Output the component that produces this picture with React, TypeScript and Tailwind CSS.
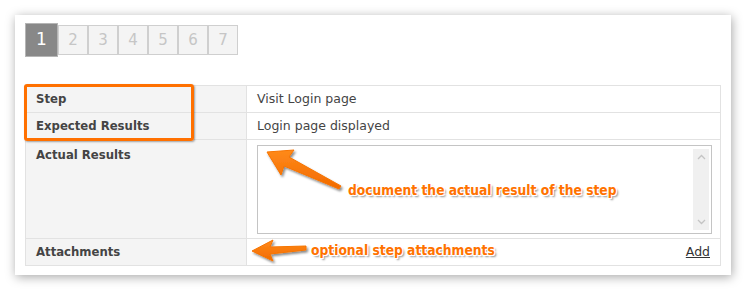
import React from 'react';

const pages = [1, 2, 3, 4, 5, 6, 7];

const noteText =
    "absolute font-bold text-[#ff7200] text-[13.7px] leading-none whitespace-nowrap [font-family:'DejaVu_Sans_Condensed','DejaVu_Sans',sans-serif] [text-shadow:-1px_-1px_0_#fff,1px_-1px_0_#fff,-1px_1px_0_#fff,1px_1px_0_#fff,0_1px_0_#fff,2px_2px_2px_rgba(0,0,0,0.45)]";

function Chevron({ up }: { up?: boolean }) {
    return (
        <svg width="9" height="6" viewBox="0 0 9 6">
            <path
                d={up ? 'M1 5 L4.5 1.5 L8 5' : 'M1 1 L4.5 4.5 L8 1'}
                fill="none"
                stroke="#c4c4c4"
                strokeWidth="1.3"
            />
        </svg>
    );
}

function Pager() {
    return (
        <div className="flex items-center h-[34px]">
            {pages.map((p) =>
                p === 1 ? (
                    <div
                        key={p}
                        className="w-[33px] h-[34px] flex items-center justify-center bg-[#888888] border border-[#b5b5b5] text-white text-[17px]"
                    >
                        {p}
                    </div>
                ) : (
                    <div
                        key={p}
                        className="w-[30px] h-[30px] flex items-center justify-center bg-[#f4f4f4] border border-[#cfcfcf] text-[#c6c6c6] text-[15px]"
                    >
                        {p}
                    </div>
                )
            )}
        </div>
    );
}

function StepTable() {
    const label = 'bg-[#f4f4f4] border border-[#e2e2e2] pl-[10px] pt-[1px] font-bold text-[11.7px] text-[#444]';
    const value = 'bg-white border border-[#e2e2e2] pl-[10px] pt-[1px] text-[12.5px] text-[#444]';

    return (
        <table className="w-[696px] border-collapse table-fixed">
            <colgroup>
                <col className="w-[221px]" />
                <col />
            </colgroup>
            <tbody>
                <tr className="h-[27px]">
                    <td className={label}>Step</td>
                    <td className={value}>Visit Login page</td>
                </tr>
                <tr className="h-[27px]">
                    <td className={label}>Expected Results</td>
                    <td className={value}>Login page displayed</td>
                </tr>
                <tr className="h-[99px]">
                    <td className={`${label} align-top pt-[7px]`}>Actual Results</td>
                    <td className={`${value} align-top pt-[5px] pr-[8px]`}>
                        <div className="h-[89px] border border-[#c4c4c4] bg-white flex justify-end py-[3px] pr-[2px]">
                            <div className="w-[16px] bg-[#f0f0f0] flex flex-col items-center justify-between py-[5px]">
                                <Chevron up />
                                <Chevron />
                            </div>
                        </div>
                    </td>
                </tr>
                <tr className="h-[27px]">
                    <td className={label}>Attachments</td>
                    <td className={`${value} text-right pr-[10px]`}>
                        <a className="underline text-[#333] decoration-[#333]">Add</a>
                    </td>
                </tr>
            </tbody>
        </table>
    );
}

function Notes() {
    return (
        <div className="absolute inset-0 pointer-events-none">
            {/* highlight around step + expected results */}
            <div className="absolute left-[24px] top-[84px] w-[170px] h-[57px] border-[3px] border-[#ff7000] rounded-[3px] shadow-[1px_1px_2px_rgba(0,0,0,0.35)]" />

            <svg className="absolute inset-0" width="746" height="295" viewBox="0 0 746 295">
                <defs>
                    <filter id="sh" x="-20%" y="-20%" width="140%" height="140%">
                        <feDropShadow dx="1.5" dy="2" stdDeviation="1.2" floodColor="#000" floodOpacity="0.45" />
                    </filter>
                    <linearGradient id="og" x1="0" y1="0" x2="0" y2="1">
                        <stop offset="0" stopColor="#ff8a1a" />
                        <stop offset="1" stopColor="#f26a00" />
                    </linearGradient>
                </defs>
                <g filter="url(#sh)" fill="url(#og)" stroke="#f77400" strokeWidth="1" strokeLinejoin="round">
                    <polygon points="267,152 294,150 289,157 341,186 339,189 284,166 281,175" />
                    <polygon points="252,251 273,240 270,247 306,246 306,250 270,254 273,261" />
                </g>
            </svg>

            <div className={`${noteText} left-[348px] top-[184px]`}>document the actual result of the step</div>
            <div className={`${noteText} left-[311px] top-[244px]`}>optional step attachments</div>
        </div>
    );
}

export default function App() {
    return (
        <div className="relative w-[746px] h-[295px] bg-white pt-[15px] pl-[15px] [font-family:'DejaVu_Sans',Verdana,sans-serif]">
            <div className="w-[716px] h-[260px] bg-white shadow-[1px_2px_10px_rgba(0,0,0,0.35)] pt-[8px] px-[10px]">
                <Pager />
                <div className="h-[28px]" />
                <StepTable />
            </div>
            <Notes />
        </div>
    );
}
